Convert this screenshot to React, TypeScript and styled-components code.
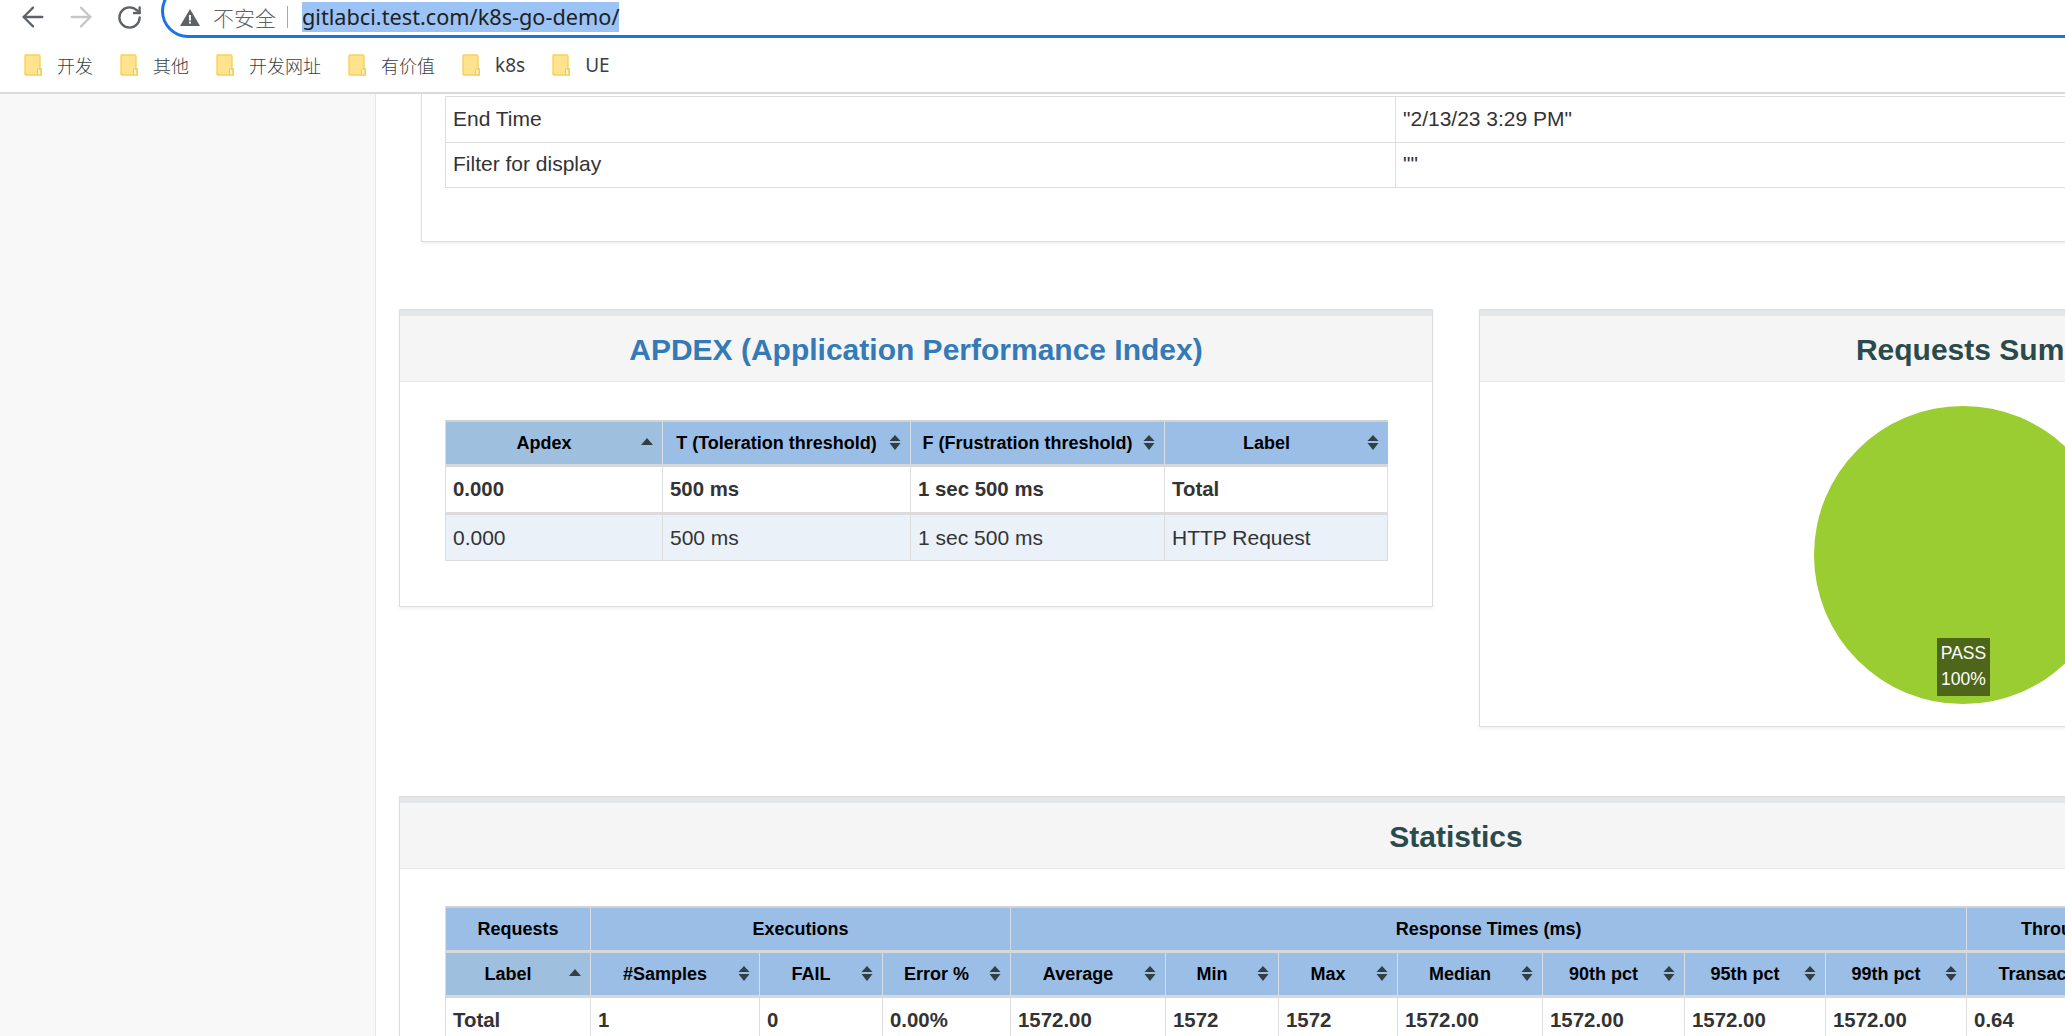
import React from 'react';
import styled, { createGlobalStyle } from 'styled-components';
import { ArrowLeft, ArrowRight, RotateCw } from 'lucide-react';

const GlobalStyle = createGlobalStyle`
    html, body {
        margin: 0;
        padding: 0;
        background: #fff;
        font-family: "Liberation Sans", Arial, sans-serif;
        color: #333;
    }
    * {
        box-sizing: border-box;
    }
`;

const Page = styled.div`
    width: 2065px;
    height: 1036px;
    overflow: hidden;
    display: flex;
    flex-direction: column;
`;

const Chrome = styled.div`
    flex: none;
    height: 94px;
    border-bottom: 2px solid #dadada;
    background: #fff;
`;

const Toolbar = styled.div`
    height: 41px;
    padding-left: 9px;
    display: flex;
    align-items: flex-start;
`;

const NavButton = styled.div<{ $color: string }>`
    width: 48px;
    height: 34px;
    display: flex;
    align-items: center;
    justify-content: center;
    color: ${(p) => p.$color};
`;

const AddressBar = styled.div`
    flex: 1;
    height: 54px;
    margin: -16px 0 0 8px;
    padding: 0 0 3px 16px;
    border: 3px solid #1a73e8;
    border-right: 0;
    border-radius: 30px 0 0 30px;
    display: flex;
    align-items: flex-end;
    font-family: "Noto Sans", "Noto Sans CJK SC", sans-serif;
`;

const WarningWrap = styled.span`
    display: flex;
    margin-bottom: 6px;
`;

const Insecure = styled.span`
    height: 30px;
    margin-left: 13px;
    padding-right: 10px;
    line-height: 30px;
    font-size: 21px;
    color: #5f6368;
    font-family: "Noto Sans CJK SC", sans-serif;
    font-weight: 300;
`;

const Divider = styled.span`
    width: 1px;
    height: 22px;
    margin: 0 14px 4px 1px;
    background: #a8a8a8;
`;

const Url = styled.span`
    height: 30px;
    padding: 0;
    background: #9cc3f5;
    color: #202124;
    font-size: 21.7px;
    line-height: 29px;
    white-space: nowrap;
`;

const Bookmarks = styled.div`
    height: 47px;
    padding-left: 24px;
    display: flex;
    align-items: center;
    gap: 27px;
`;

const Bookmark = styled.div<{ $latin?: boolean }>`
    display: flex;
    align-items: center;
    gap: 15px;
    font-family: ${(p) => (p.$latin ? '"Noto Sans", sans-serif' : '"Noto Sans CJK SC", sans-serif')};
    font-weight: ${(p) => (p.$latin ? 400 : 300)};
    font-size: ${(p) => (p.$latin ? 19 : 18)}px;
    color: #3c4043;
`;

const Content = styled.div`
    flex: 1;
    min-height: 0;
    display: flex;
`;

const Sidebar = styled.div`
    flex: none;
    width: 376px;
    background: #f8f8f8;
    border-right: 1px solid #e7e7e7;
`;

const Main = styled.div`
    flex: none;
    width: 2140px;
    padding-left: 23px;
`;

const InfoCard = styled.div`
    margin-left: 22px;
    height: 148px;
    padding: 2px 0 0 23px;
    background: #fff;
    border: 1px solid #ddd;
    border-top: 0;
    box-shadow: 0 2px 3px rgba(0, 0, 0, 0.06);
`;

const InfoTable = styled.table`
    width: 2000px;
    table-layout: fixed;
    border-collapse: separate;
    border-spacing: 0;
    font-size: 21px;
`;

const InfoCell = styled.td`
    height: 46px;
    padding: 0 8px 2px 7px;
    border-left: 1px solid #ddd;
    border-top: 1px solid #ddd;
    tr:last-child > & {
        border-bottom: 1px solid #ddd;
    }
`;

const CardRow = styled.div`
    margin-top: 67px;
    display: grid;
    grid-template-columns: 1034px 1034px;
    column-gap: 46px;
    align-items: start;
`;

const Card = styled.div`
    background: #fff;
    border: 1px solid #ddd;
    box-shadow: 0 2px 3px rgba(0, 0, 0, 0.06);
`;

const WideCard = styled(Card)`
    margin-top: 69px;
    width: 2114px;
`;

const CardHeading = styled.div`
    height: 72px;
    border-top: 6px solid #e4e7ea;
    border-bottom: 1px solid #eaeaea;
    background: #f5f5f5;
    display: flex;
    align-items: center;
    justify-content: center;
`;

const CardTitle = styled.h2<{ $link?: boolean }>`
    margin: 2px 0 0;
    font-size: 30px;
    font-weight: bold;
    color: ${(p) => (p.$link ? '#337ab7' : '#2b4a4c')};
`;

const CardBody = styled.div<{ $top: number }>`
    padding: ${(p) => p.$top}px 45px 45px;
`;

const PieBody = styled.div`
    height: 344px;
    padding: 24px 0 0 334px;
`;

const PieWrap = styled.div`
    position: relative;
    width: 298px;
    height: 298px;
`;

const PieLabel = styled.div`
    position: absolute;
    left: 123px;
    top: 232px;
    width: 53px;
    height: 58px;
    padding-top: 2px;
    background: #4d6619;
    color: #fff;
    font-size: 17.5px;
    line-height: 26px;
    text-align: center;
`;

const DataTable = styled.table`
    table-layout: fixed;
    border-collapse: separate;
    border-spacing: 0;
    font-size: 21px;
`;

const Col = styled.col<{ $w: number }>`
    width: ${(p) => p.$w}px;
`;

const Head = styled.th<{ $sorted?: boolean; $group?: boolean; $top?: boolean }>`
    position: relative;
    height: ${(p) => (p.$top ? 47 : 45)}px;
    padding: ${(p) => (p.$group ? '1px 8px 0' : '0 28px 0 8px')};
    background: ${(p) => (p.$sorted ? '#9fbfdf' : '#9abee6')};
    color: #000;
    font-size: 18px;
    font-weight: bold;
    text-align: center;
    white-space: nowrap;
    border-left: 1px solid #d8dde3;
    border-top: ${(p) => (p.$top ? '2px solid #d2d2d2' : '0')};
    border-bottom: 3px solid #d8d8d8;
`;

const SortMark = styled.svg`
    position: absolute;
    right: 9px;
    top: 50%;
    margin-top: -11px;
    fill: #2f3f42;
`;

const Cell = styled.td<{ $bold?: boolean; $alt?: boolean; $last?: boolean }>`
    height: ${(p) => (p.$last ? 46 : 48)}px;
    padding: 0 8px 0 7px;
    font-weight: ${(p) => (p.$bold ? 'bold' : 'normal')};
    font-size: ${(p) => (p.$bold ? 20.4 : 21)}px;
    background: ${(p) => (p.$alt ? '#eaf1f9' : '#fff')};
    border-left: 1px solid #ddd;
    border-bottom: ${(p) => (p.$last ? '1px solid #ddd' : '3px solid #dcdcdc')};
    white-space: nowrap;
    &:last-child {
        border-right: 1px solid #ddd;
    }
`;

const Warning = () => (
    <WarningWrap>
        <svg width="20" height="17" viewBox="0 0 20 17">
            <path d="M10 0 L20 17 L0 17 Z" fill="#5f6368" />
            <rect x="9" y="6" width="2" height="5.5" fill="#fff" />
            <rect x="9" y="12.6" width="2" height="2" fill="#fff" />
        </svg>
    </WarningWrap>
);

const Folder = () => (
    <svg width="18" height="22" viewBox="0 0 18 22">
        <path d="M1 1.5 Q1 1 1.5 1 L14.5 1 Q16 1 16 2.5 L16 14 L17.5 15 L17.5 21 L1.5 21 Q1 21 1 20.5 Z" fill="#ffe38d" stroke="#f6d160" strokeWidth="1.4" />
        <rect x="13.5" y="15" width="3.4" height="6" rx="1.2" fill="#fff3c4" stroke="#f0c64e" strokeWidth="1" />
    </svg>
);

const SortIcon = ({ sorted }: { sorted?: boolean }) => (
    <SortMark width="12" height="20" viewBox="0 0 12 20">
        {sorted ? (
            <path d="M6 6 L12 13 L0 13 Z" />
        ) : (
            <>
                <path d="M6 3 L11.5 9 L0.5 9 Z" />
                <path d="M6 18 L11.5 11 L0.5 11 Z" />
            </>
        )}
    </SortMark>
);

const bookmarks = ['开发', '其他', '开发网址', '有价值', 'k8s', 'UE'];

const apdexHeads = [
    { text: 'Apdex', sorted: true },
    { text: 'T (Toleration threshold)' },
    { text: 'F (Frustration threshold)' },
    { text: 'Label' },
];

const apdexRows = [
    ['0.000', '500 ms', '1 sec 500 ms', 'Total'],
    ['0.000', '500 ms', '1 sec 500 ms', 'HTTP Request'],
];

const statHeads = [
    { text: 'Label', sorted: true },
    { text: '#Samples' },
    { text: 'FAIL' },
    { text: 'Error %' },
    { text: 'Average' },
    { text: 'Min' },
    { text: 'Max' },
    { text: 'Median' },
    { text: '90th pct' },
    { text: '95th pct' },
    { text: '99th pct' },
    { text: 'Transactions/s' },
];

const statGroups = [
    { text: 'Requests', span: 1 },
    { text: 'Executions', span: 3 },
    { text: 'Response Times (ms)', span: 7 },
    { text: 'Throughput', span: 1 },
];

const statTotal = ['Total', '1', '0', '0.00%', '1572.00', '1572', '1572', '1572.00', '1572.00', '1572.00', '1572.00', '0.64'];

const apdexCols = [217, 248, 254, 224];
const statCols = [145, 169, 123, 128, 155, 113, 119, 145, 142, 141, 141, 210];

const App = () => {
    return (
        <Page>
            <GlobalStyle />
            <Chrome>
                <Toolbar>
                    <NavButton $color="#5f6368"><ArrowLeft size={32} strokeWidth={1.7} /></NavButton>
                    <NavButton $color="#c4c6c8"><ArrowRight size={32} strokeWidth={1.7} /></NavButton>
                    <NavButton $color="#5f6368"><RotateCw size={27} strokeWidth={2.1} /></NavButton>
                    <AddressBar>
                        <Warning />
                        <Insecure>不安全</Insecure>
                        <Divider />
                        <Url>gitlabci.test.com/k8s-go-demo/</Url>
                    </AddressBar>
                </Toolbar>
                <Bookmarks>
                    {bookmarks.map((item) => (
                        <Bookmark key={item} $latin={/^[a-zA-Z]/.test(item)}>
                            <Folder />
                            {item}
                        </Bookmark>
                    ))}
                </Bookmarks>
            </Chrome>
            <Content>
                <Sidebar />
                <Main>
                    <InfoCard>
                        <InfoTable>
                            <colgroup>
                                <Col $w={950} />
                                <Col $w={1050} />
                            </colgroup>
                            <tbody>
                                <tr>
                                    <InfoCell>End Time</InfoCell>
                                    <InfoCell>"2/13/23 3:29 PM"</InfoCell>
                                </tr>
                                <tr>
                                    <InfoCell>Filter for display</InfoCell>
                                    <InfoCell>""</InfoCell>
                                </tr>
                            </tbody>
                        </InfoTable>
                    </InfoCard>
                    <CardRow>
                        <Card>
                            <CardHeading>
                                <CardTitle $link>APDEX (Application Performance Index)</CardTitle>
                            </CardHeading>
                            <CardBody $top={38}>
                                <DataTable style={{ width: apdexCols.reduce((a, b) => a + b, 0) }}>
                                    <colgroup>
                                        {apdexCols.map((w, i) => <Col key={i} $w={w} />)}
                                    </colgroup>
                                    <thead>
                                        <tr>
                                            {apdexHeads.map((h) => (
                                                <Head key={h.text} $sorted={h.sorted} $top>
                                                    {h.text}
                                                    <SortIcon sorted={h.sorted} />
                                                </Head>
                                            ))}
                                        </tr>
                                    </thead>
                                    <tbody>
                                        {apdexRows.map((row, r) => (
                                            <tr key={r}>
                                                {row.map((value, i) => (
                                                    <Cell key={i} $bold={r === 0} $alt={r === 1} $last={r === 1}>{value}</Cell>
                                                ))}
                                            </tr>
                                        ))}
                                    </tbody>
                                </DataTable>
                            </CardBody>
                        </Card>
                        <Card>
                            <CardHeading>
                                <CardTitle>Requests Summary</CardTitle>
                            </CardHeading>
                            <PieBody>
                                <PieWrap>
                                    <svg width="298" height="298" viewBox="0 0 298 298">
                                        <circle cx="149" cy="149" r="149" fill="#9acd32" />
                                    </svg>
                                    <PieLabel>PASS<br />100%</PieLabel>
                                </PieWrap>
                            </PieBody>
                        </Card>
                    </CardRow>
                    <WideCard>
                        <CardHeading>
                            <CardTitle>Statistics</CardTitle>
                        </CardHeading>
                        <CardBody $top={37}>
                            <DataTable style={{ width: statCols.reduce((a, b) => a + b, 0) }}>
                                <colgroup>
                                    {statCols.map((w, i) => <Col key={i} $w={w} />)}
                                </colgroup>
                                <thead>
                                    <tr>
                                        {statGroups.map((g) => (
                                            <Head key={g.text} colSpan={g.span} $group $top>{g.text}</Head>
                                        ))}
                                    </tr>
                                    <tr>
                                        {statHeads.map((h) => (
                                            <Head key={h.text} $sorted={h.sorted}>
                                                {h.text}
                                                <SortIcon sorted={h.sorted} />
                                            </Head>
                                        ))}
                                    </tr>
                                </thead>
                                <tbody>
                                    <tr>
                                        {statTotal.map((value, i) => (
                                            <Cell key={i} $bold>{value}</Cell>
                                        ))}
                                    </tr>
                                </tbody>
                            </DataTable>
                        </CardBody>
                    </WideCard>
                </Main>
            </Content>
        </Page>
    );
};

export default App;
